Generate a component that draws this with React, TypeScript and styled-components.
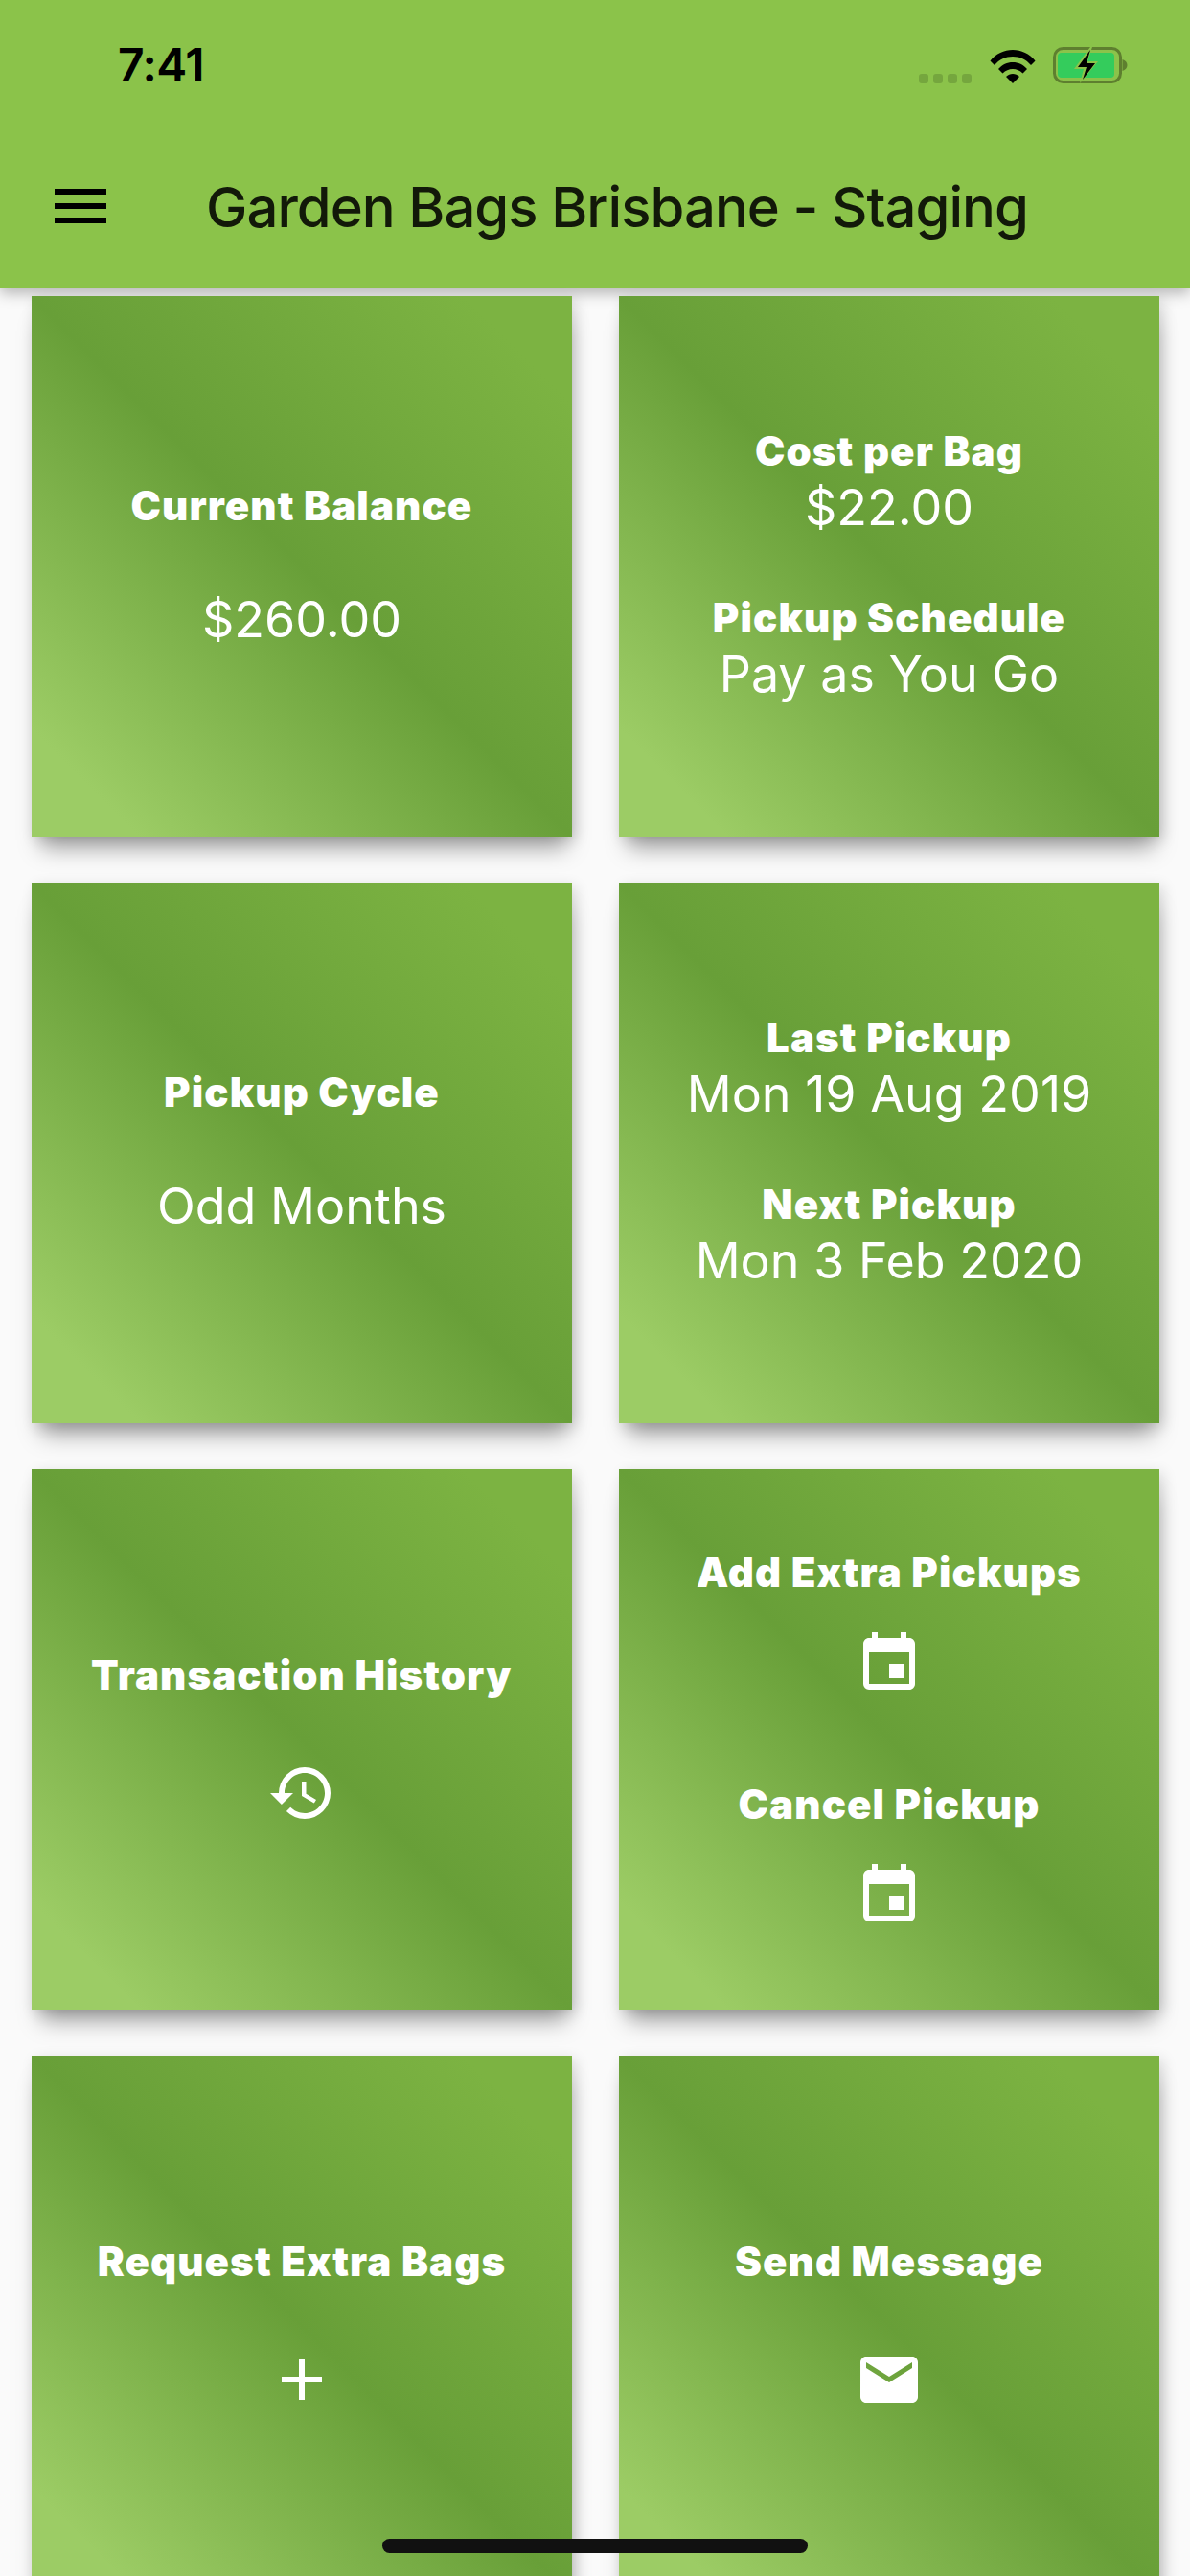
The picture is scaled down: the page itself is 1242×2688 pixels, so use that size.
import React from "react";
import styled, { createGlobalStyle } from "styled-components";
import { MdAdd, MdEmail, MdEvent, MdHistory, MdMenu } from "react-icons/md";

const GlobalStyle = createGlobalStyle`
  html, body {
    margin: 0;
    padding: 0;
    background: #fafafa;
  }
  * {
    box-sizing: border-box;
  }
`;

const Page = styled.div`
  position: relative;
  width: 1242px;
  height: 2688px;
  overflow: hidden;
  background: #fafafa;
  font-family: Inter, "Liberation Sans", sans-serif;
`;

const Header = styled.header`
  height: 300px;
  background: #8bc34a;
  box-shadow: 0 6px 14px rgba(0, 0, 0, 0.28);
`;

const StatusBar = styled.div`
  display: flex;
  align-items: flex-start;
  justify-content: space-between;
  height: 132px;
  padding: 49px 63px 0 123px;
`;

const Time = styled.span`
  font-size: 48px;
  font-weight: 600;
  line-height: 37px;
  letter-spacing: -0.5px;
  color: #000;
`;

const StatusIcons = styled.div`
  display: flex;
  align-items: flex-end;
`;

const SignalDots = styled.div`
  display: flex;
  gap: 5px;
  margin-right: 19px;
  > i {
    width: 10px;
    height: 10px;
    border-radius: 3px;
    background: #75a63e;
  }
`;

const BatterySvg = styled.svg`
  margin-left: 18px;
`;

const ToolBar = styled.div`
  display: flex;
  align-items: center;
  height: 168px;
  padding-left: 48px;
  padding-bottom: 2px;
  color: #000;
`;

const PageTitle = styled.h1`
  margin: 2px 0 0 95px;
  font-size: 58px;
  font-weight: 500;
  line-height: 73px;
  letter-spacing: -0.95px;
  color: rgba(0, 0, 0, 0.87);
  white-space: nowrap;
`;

const Grid = styled.main`
  display: grid;
  grid-template-columns: 564px 564px;
  grid-auto-rows: 564px;
  gap: 48px 49px;
  padding: 9px 32px 0 33px;
`;

const Card = styled.section<{ $gap?: number }>`
  display: flex;
  flex-direction: column;
  align-items: center;
  justify-content: center;
  gap: ${(p) => p.$gap ?? 0}px;
  background: linear-gradient(45deg, #9ccc65 10%, #689f38 50%, #7cb342 90%);
  box-shadow: 2px 20px 22px -8px rgba(0, 0, 0, 0.34), 4px 4px 14px rgba(0, 0, 0, 0.14);
  color: #fff;
  text-align: center;
`;

const Block = styled.div<{ $gap?: number }>`
  display: flex;
  flex-direction: column;
  align-items: center;
  gap: ${(p) => p.$gap ?? 0}px;
`;

const CardTitle = styled.div`
  font-size: 42px;
  font-weight: 900;
  line-height: 47px;
  letter-spacing: 1.1px;
`;

const CardValue = styled.div`
  font-size: 52px;
  font-weight: 400;
  line-height: 63px;
`;

const HomeIndicator = styled.div`
  position: absolute;
  left: 399px;
  bottom: 24px;
  width: 444px;
  height: 15px;
  border-radius: 8px;
  background: #111;
`;

function WifiIcon() {
  return (
    <svg width="48" height="36" viewBox="0 0 48 36">
      <path
        d="M0.5 12.5C6.5 5 15 1 24 1s17.500 4 23.500 11.500l-4.500 4.500C38 11 31.500 8 24 8S10 11 5 17z"
        fill="#000"
      />
      <path d="M9 21c4-4.500 9-7 15-7s11 2.500 15 7l-4.500 4.500C31.500 22.500 28 21 24 21s-7.500 1.500-10.500 4.500z" fill="#000" />
      <path d="M17 29c2-2 4.500-3 7-3s5 1 7 3l-7 7z" fill="#000" />
    </svg>
  );
}

function BatteryIcon() {
  return (
    <BatterySvg width="80" height="38" viewBox="0 0 80 38">
      <rect x="1.500" y="1.500" width="69" height="35" rx="9" fill="none" stroke="#5e7f2f" strokeWidth="3" />
      <rect x="5" y="6" width="59" height="26" rx="4" fill="#34cc5c" />
      <path d="M72.500 13c3 1 5 3 5 6s-2 5-5 6z" fill="#5e7f2f" />
      <path d="M39 0 22 23h10l-4 15 19-23H36l5-15z" fill="#8bc34a" />
      <path d="M39 3 26 21h9l-4 13 13-17h-9l4-14z" fill="#000" />
    </BatterySvg>
  );
}

function App() {
  return (
    <Page>
      <GlobalStyle />
      <Header>
        <StatusBar>
          <Time>7:41</Time>
          <StatusIcons>
            <SignalDots>
              <i />
              <i />
              <i />
              <i />
            </SignalDots>
            <WifiIcon />
            <BatteryIcon />
          </StatusIcons>
        </StatusBar>
        <ToolBar>
          <MdMenu size={72} />
          <PageTitle>Garden Bags Brisbane - Staging</PageTitle>
        </ToolBar>
      </Header>
      <Grid>
        <Card>
          <Block $gap={64}>
            <CardTitle>Current Balance</CardTitle>
            <CardValue>$260.00</CardValue>
          </Block>
        </Card>
        <Card $gap={60}>
          <Block $gap={4}>
            <CardTitle>Cost per Bag</CardTitle>
            <CardValue>$22.00</CardValue>
          </Block>
          <Block $gap={4}>
            <CardTitle>Pickup Schedule</CardTitle>
            <CardValue>Pay as You Go</CardValue>
          </Block>
        </Card>
        <Card>
          <Block $gap={64}>
            <CardTitle>Pickup Cycle</CardTitle>
            <CardValue>Odd Months</CardValue>
          </Block>
        </Card>
        <Card $gap={60}>
          <Block $gap={4}>
            <CardTitle>Last Pickup</CardTitle>
            <CardValue>Mon 19 Aug 2019</CardValue>
          </Block>
          <Block $gap={4}>
            <CardTitle>Next Pickup</CardTitle>
            <CardValue>Mon 3 Feb 2020</CardValue>
          </Block>
        </Card>
        <Card>
          <Block $gap={64}>
            <CardTitle>Transaction History</CardTitle>
            <MdHistory size={72} />
          </Block>
        </Card>
        <Card $gap={87}>
          <Block $gap={36}>
            <CardTitle>Add Extra Pickups</CardTitle>
            <MdEvent size={72} />
          </Block>
          <Block $gap={36}>
            <CardTitle>Cancel Pickup</CardTitle>
            <MdEvent size={72} />
          </Block>
        </Card>
        <Card>
          <Block $gap={64}>
            <CardTitle>Request Extra Bags</CardTitle>
            <MdAdd size={72} />
          </Block>
        </Card>
        <Card>
          <Block $gap={64}>
            <CardTitle>Send Message</CardTitle>
            <MdEmail size={72} />
          </Block>
        </Card>
      </Grid>
      <HomeIndicator />
    </Page>
  );
}

export default App;
